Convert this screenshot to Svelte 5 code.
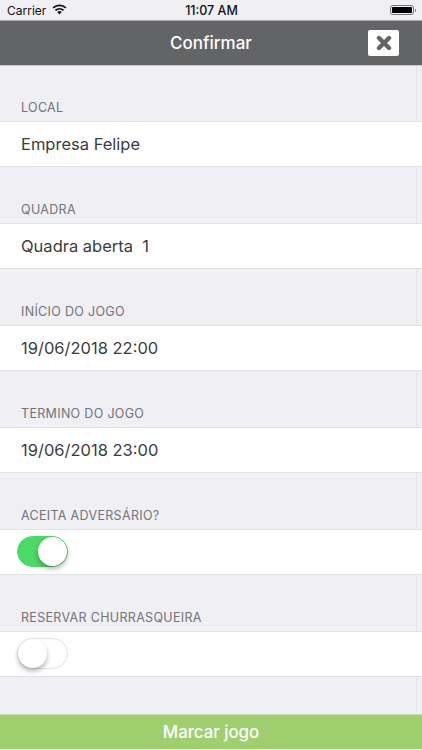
<script>
  const fields = [
    { label: 'LOCAL', value: 'Empresa Felipe' },
    { label: 'QUADRA', value: 'Quadra aberta  1' },
    { label: 'INÍCIO DO JOGO', value: '19/06/2018 22:00' },
    { label: 'TERMINO DO JOGO', value: '19/06/2018 23:00' },
    { label: 'ACEITA ADVERSÁRIO?', toggle: true, on: true },
    { label: 'RESERVAR CHURRASQUEIRA', toggle: true, on: false }
  ];
</script>

<div class="screen">
  <header class="status">
    <div class="left">
      <span>Carrier</span>
      <svg class="wifi" width="15" height="11" viewBox="0 0 16 12">
        <path d="M8 11.5 5.6 8.7a3.6 3.6 0 0 1 4.8 0Z" fill="#111" />
        <path d="M2.9 6.2a7.6 7.6 0 0 1 10.2 0l-1.3 1.4a5.7 5.7 0 0 0-7.6 0Z" fill="#111" />
        <path d="M.4 3.5a11.2 11.2 0 0 1 15.2 0l-1.3 1.4a9.3 9.3 0 0 0-12.6 0Z" fill="#111" />
      </svg>
    </div>
    <span class="time">11:07 AM</span>
    <div class="battery"><div class="cell"></div><div class="nub"></div></div>
  </header>

  <nav class="bar">
    <span class="title">Confirmar</span>
    <button class="close" aria-label="Fechar">
      <svg width="16" height="16" viewBox="0 0 16 16">
        <path d="M3 3 13 13M13 3 3 13" stroke="#636466" stroke-width="4.4" stroke-linecap="round" />
      </svg>
    </button>
  </nav>

  <main class="form">
    <div class="scroll-line"></div>
    {#each fields as f}
      <section class="group">
        <h2 class="label">{f.label}</h2>
        <div class="row">
          {#if f.toggle}
            <div class="switch" class:on={f.on}><div class="knob"></div></div>
          {:else}
            <span class="value">{f.value}</span>
          {/if}
        </div>
      </section>
    {/each}
  </main>

  <button class="submit">Marcar jogo</button>
</div>

<style>
  :global(body) {
    margin: 0;
    background: #fff;
  }
  .screen {
    width: 422px;
    height: 750px;
    display: flex;
    flex-direction: column;
    background: #efeff4;
    font-family: Inter, "Liberation Sans", sans-serif;
    overflow: hidden;
  }
  .status {
    height: 20px;
    flex: none;
    display: grid;
    grid-template-columns: 1fr auto 1fr;
    align-items: center;
    padding: 0 6px 0 7px;
    font-size: 12px;
    color: #111;
    border-bottom: 1px solid #a9a9ab;
  }
  .left {
    display: flex;
    align-items: center;
    gap: 6px;
  }
  .wifi {
    margin-top: -2px;
  }
  .time {
    font-weight: 500;
    font-size: 12.5px;
  }
  .battery {
    justify-self: end;
    display: flex;
    align-items: center;
  }
  .cell {
    width: 20px;
    height: 6px;
    background: #000;
    background-clip: content-box;
    border: 1px solid #777;
    border-radius: 3px;
    padding: 1px;
    box-sizing: content-box;
  }
  .nub {
    width: 1px;
    height: 3px;
    background: #888;
    margin-left: 1px;
  }
  .bar {
    height: 44px;
    flex: none;
    background: #636466;
    display: flex;
    align-items: center;
    justify-content: center;
    position: relative;
    border-bottom: 1px solid #c9c9cc;
  }
  .title {
    color: #fff;
    font-size: 17px;
    font-weight: 500;
  }
  .close {
    position: absolute;
    right: 23px;
    top: 9px;
    width: 31px;
    height: 26px;
    padding: 0;
    border: 0;
    border-radius: 2px;
    background: #fff;
    display: flex;
    align-items: center;
    justify-content: center;
  }
  .form {
    flex: 1;
    position: relative;
    padding-top: 10px;
  }
  .scroll-line {
    position: absolute;
    left: 416px;
    top: 0;
    bottom: 2px;
    width: 1px;
    background: #e4e4e8;
  }
  .group {
    position: relative;
    height: 102px;
    display: flex;
    flex-direction: column;
    justify-content: flex-end;
    box-sizing: border-box;
    padding-bottom: 11px;
  }
  .label {
    margin: 0 0 5px 21px;
    font-size: 12.5px;
    line-height: 16px;
    font-weight: 400;
    letter-spacing: 0.32px;
    color: #737378;
  }
  .row {
    height: 44px;
    background: #fff;
    border-top: 1px solid #e3e3e6;
    border-bottom: 1px solid #e3e3e6;
    display: flex;
    align-items: center;
    padding-left: 21px;
    position: relative;
  }
  .value {
    font-size: 16.5px;
    color: #3c3c3e;
    white-space: pre;
  }
  .switch {
    position: absolute;
    left: 17px;
    top: 6px;
    width: 51px;
    height: 31px;
    box-sizing: border-box;
    border-radius: 16px;
    border: 1.5px solid #e2e2e2;
    background: #fff;
  }
  .switch.on {
    background: #4cd964;
    border-color: #4cd964;
  }
  .knob {
    position: absolute;
    left: -0.5px;
    top: -0.5px;
    width: 29px;
    height: 29px;
    border-radius: 50%;
    background: #fff;
    box-shadow: 0 3px 5px rgba(0, 0, 0, 0.3);
  }
  .switch.on .knob {
    left: 20px;
  }
  .submit {
    flex: none;
    height: 35px;
    margin-bottom: 1px;
    border: 0;
    border-top: 1px solid #c5dfae;
    background: #a0cf70;
    color: #fff;
    font-family: inherit;
    font-size: 16.8px;
    font-weight: 500;
    padding: 0;
  }
</style>
